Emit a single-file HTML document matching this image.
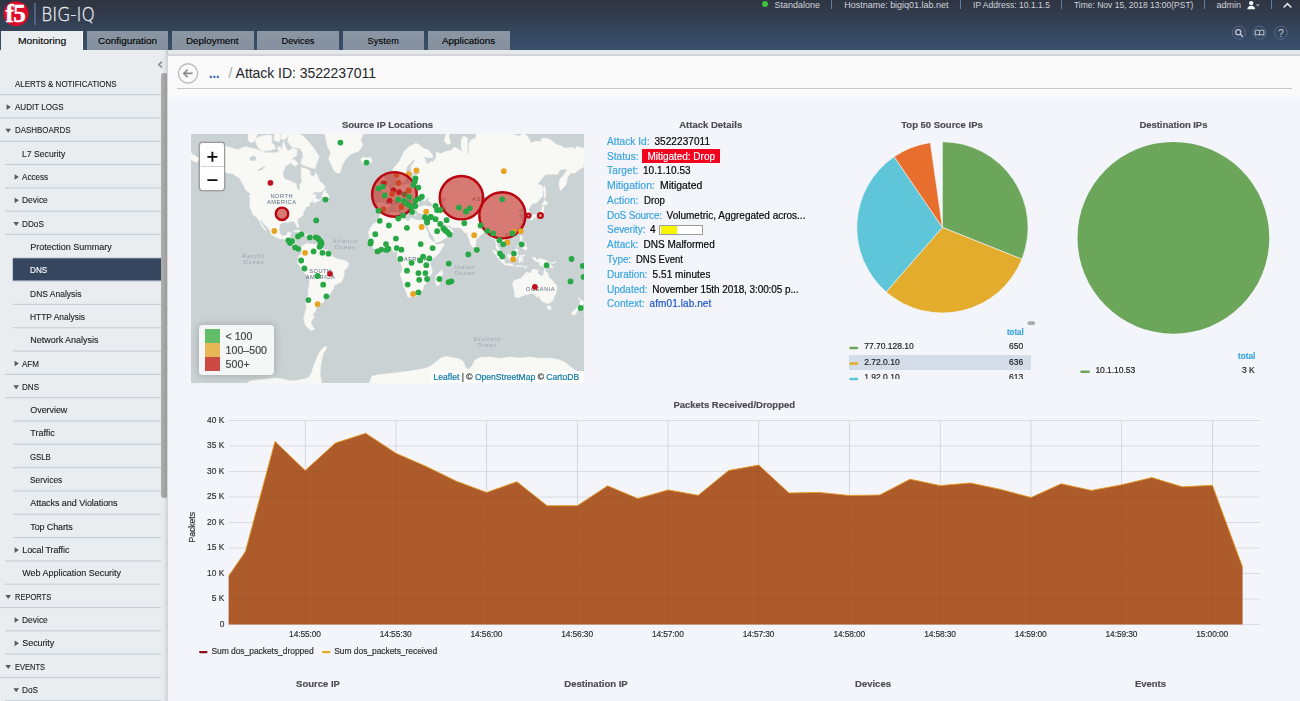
<!DOCTYPE html>
<html lang="en"><head><meta charset="utf-8"><title>BIG-IQ - Attack ID: 3522237011</title>
<style>
*{box-sizing:border-box}
html,body{margin:0;padding:0}
body{width:1300px;height:701px;position:relative;overflow:hidden;background:#f4f5fa;font-family:"Liberation Sans",Arial,sans-serif;}
.t{position:absolute;white-space:pre;line-height:1;}
.a{position:absolute;}
#hdr{position:absolute;left:0;top:0;width:1300px;height:50px;background:linear-gradient(#2f3441 0%,#323b4c 30%,#364962 75%,#38506b 100%);}
#band{position:absolute;left:0;top:50px;width:1300px;height:6px;background:linear-gradient(#e4e8eb 0,#e4e8eb 60%,#c9cccf 85%,#d6d8da 100%);}
.tab{position:absolute;top:31px;height:19px;background:linear-gradient(#8a96a4,#84909e);}
.tab.on{background:#e9edf0;border-right:1px solid #f6f8fa;}
#side{position:absolute;left:0;top:50px;width:161px;height:651px;background:#e9edf0;will-change:transform;}
#side .t{-webkit-text-stroke-width:0.12px}
.sl{position:absolute;height:1px;background:#c4ced9;right:0;}
#sbar{position:absolute;left:161px;top:50px;width:7px;height:651px;background:linear-gradient(90deg,#e9edf0 0%,#e3e6e9 55%,#c3c6c9 100%);}
#thumb{position:absolute;left:161px;top:73px;width:7.4px;height:425.4px;background:linear-gradient(90deg,#adadad,#a4a4a4 50%,#979797);border-radius:3px;}
#content{position:absolute;left:0;top:0;width:1300px;height:701px;will-change:transform;pointer-events:none}
#content .t{-webkit-text-stroke-width:0.18px}
#top{position:absolute;left:168px;top:56px;width:1132px;height:41px;background:#fafafa;}
#main{position:absolute;left:168px;top:97px;width:1132px;height:604px;background:#f4f5fa;}
svg{position:absolute;display:block}
#map{left:191px;top:134px;}
#pies{left:840px;top:130px;}
#chart{left:180px;top:410px;}
</style></head><body>
<div id="hdr">
<svg class="a" style="left:0;top:0" width="36" height="30" viewBox="0 0 36 30"><circle cx="16" cy="13.7" r="12.5" fill="#dd0b2b"/><text x="15.3" y="22" text-anchor="middle" font-family="Liberation Serif, serif" font-weight="700" font-size="25" fill="#fff" stroke="#fff" stroke-width="0.5" style="letter-spacing:-0.5px">f5</text></svg>
<div class="a" style="left:34.2px;top:3px;width:1.5px;height:22px;background:#4f617e"></div>
<svg class="a" style="left:38px;top:0" width="64" height="30" viewBox="38 0 64 30"><text x="41.2" y="20.8" font-family="DejaVu Sans, Liberation Sans, sans-serif" font-weight="200" font-size="19.6" fill="#e8eaee" stroke="#e8eaee" stroke-width="0.3" textLength="53.6" lengthAdjust="spacingAndGlyphs">BIG-IQ</text></svg>
<div class="tab on" style="left:1px;width:82px"></div>
<span class="t" style="left:17.90px;top:36.70px;font-size:9.2px;color:#000;transform:scaleX(1.1221);transform-origin:0 50%;-webkit-text-stroke:0.12px #000;">Monitoring</span>
<div class="tab" style="left:86.5px;width:81.5px"></div>
<span class="t" style="left:97.65px;top:36.70px;font-size:9.2px;color:#000;transform:scaleX(1.0818);transform-origin:0 50%;-webkit-text-stroke:0.12px #000;">Configuration</span>
<div class="tab" style="left:172px;width:81.5px"></div>
<span class="t" style="left:186.45px;top:36.70px;font-size:9.2px;color:#000;transform:scaleX(1.0715);transform-origin:0 50%;-webkit-text-stroke:0.12px #000;">Deployment</span>
<div class="tab" style="left:257px;width:82px"></div>
<span class="t" style="left:281.50px;top:36.70px;font-size:9.2px;color:#000;letter-spacing:0.040px;-webkit-text-stroke:0.12px #000;">Devices</span>
<div class="tab" style="left:342.5px;width:81.5px"></div>
<span class="t" style="left:367.55px;top:36.70px;font-size:9.2px;color:#000;letter-spacing:0.121px;-webkit-text-stroke:0.12px #000;">System</span>
<div class="tab" style="left:428px;width:81.5px"></div>
<span class="t" style="left:442.15px;top:36.70px;font-size:9.2px;color:#000;transform:scaleX(1.0724);transform-origin:0 50%;-webkit-text-stroke:0.12px #000;">Applications</span>
<div class="a" style="left:762.4px;top:1.2px;width:6px;height:6px;border-radius:3px;background:#3fc33c"></div>
<span class="t" style="left:774.60px;top:0.60px;font-size:9px;color:#cfd4dc;letter-spacing:-0.014px;">Standalone</span>
<span class="t" style="left:844.30px;top:0.60px;font-size:9px;color:#cfd4dc;letter-spacing:-0.019px;">Hostname: bigiq01.lab.net</span>
<span class="t" style="left:972.60px;top:0.60px;font-size:9px;color:#cfd4dc;transform:scaleX(0.9519);transform-origin:0 50%;">IP Address: 10.1.1.5</span>
<span class="t" style="left:1073.60px;top:0.60px;font-size:9px;color:#cfd4dc;transform:scaleX(0.9422);transform-origin:0 50%;">Time: Nov 15, 2018 13:00(PST)</span>
<span class="t" style="left:1216.40px;top:0.60px;font-size:9px;color:#cfd4dc;letter-spacing:0.017px;">admin</span>
<div class="a" style="left:831.0px;top:0;width:1px;height:9px;background:#5c7ea8"></div>
<div class="a" style="left:959.9px;top:0;width:1px;height:9px;background:#5c7ea8"></div>
<div class="a" style="left:1060.9px;top:0;width:1px;height:9px;background:#5c7ea8"></div>
<div class="a" style="left:1203.9px;top:0;width:1px;height:9px;background:#5c7ea8"></div>
<div class="a" style="left:1270.9px;top:0;width:1px;height:9px;background:#5c7ea8"></div>
<svg class="a" style="left:1245px;top:0" width="50" height="12" viewBox="1245 0 50 12"><circle cx="1251.2" cy="3.1" r="2.2" fill="#f1f2f4"/><path d="M1247.3 9.3 q0.2 -3.5 3.9 -3.5 q3.7 0 3.9 3.5z" fill="#f1f2f4"/><path d="M1255.9 4.4h3.8l-1.9 2.1z" fill="#b9bfc8"/><path d="M1283.6 7.5l3.9-3.8 3.9 3.8" fill="none" stroke="#e3e5e9" stroke-width="1.6"/></svg>
<svg class="a" style="left:1228px;top:22px" width="66" height="22" viewBox="1228 22 66 22" fill="none" stroke="#c3c9d2"><g stroke="#586c8c" stroke-width="0.9"><circle cx="1238.9" cy="32.7" r="6.5"/><circle cx="1259.7" cy="32.7" r="6.5"/><circle cx="1280.9" cy="32.7" r="6.5"/></g><circle cx="1238.3" cy="32.3" r="2.6" stroke-width="1.25"/><path d="M1240.3 34.3l2.5 2.4" stroke-width="1.5"/><path d="M1255.3 30.6q2.1 -1.2 4.3 0q2.2 -1.2 4.3 0v4.5q-2.1 -1 -4.3 0q-2.2 -1 -4.3 0zM1259.6 30.6v4.5" stroke-width="1"/></svg>
<span class="t" style="left:1277.98px;top:27.85px;font-size:10.5px;color:#c3c9d2;">?</span>
</div>
<div id="band"></div>
<div id="side">
<svg class="a" style="left:0;top:0" width="161" height="651" viewBox="0 0 161 651"><rect x="0" y="44.00" width="161" height="1.2" fill="#c6d0da"/><path transform="translate(8.5 57.11)" d="M-1.9 -2.8L2.3 0L-1.9 2.8z" fill="#55585e"/><rect x="0" y="67.31" width="161" height="1.2" fill="#c6d0da"/><path transform="translate(8.2 80.53)" d="M-2.8 -1.7L2.8 -1.7L0 2.2z" fill="#55585e"/><rect x="0" y="90.63" width="161" height="1.2" fill="#c6d0da"/><rect x="5" y="113.94" width="156" height="1.2" fill="#c6d0da"/><path transform="translate(16.5 127.06)" d="M-1.9 -2.8L2.3 0L-1.9 2.8z" fill="#55585e"/><rect x="5" y="137.26" width="156" height="1.2" fill="#c6d0da"/><path transform="translate(16.5 150.37)" d="M-1.9 -2.8L2.3 0L-1.9 2.8z" fill="#55585e"/><rect x="5" y="160.57" width="156" height="1.2" fill="#c6d0da"/><path transform="translate(16.2 173.78)" d="M-2.8 -1.7L2.8 -1.7L0 2.2z" fill="#55585e"/><rect x="5" y="183.88" width="156" height="1.2" fill="#c6d0da"/><rect x="12.8" y="207.20" width="148.2" height="1.2" fill="#c6d0da"/><rect x="12.8" y="208.31" width="148.2" height="22.6" fill="#36465f"/><rect x="12.8" y="230.51" width="148.2" height="1.2" fill="#c6d0da"/><rect x="12.8" y="253.83" width="148.2" height="1.2" fill="#c6d0da"/><rect x="12.8" y="277.14" width="148.2" height="1.2" fill="#c6d0da"/><rect x="12.8" y="300.45" width="148.2" height="1.2" fill="#c6d0da"/><path transform="translate(16.5 313.57)" d="M-1.9 -2.8L2.3 0L-1.9 2.8z" fill="#55585e"/><rect x="5" y="323.77" width="156" height="1.2" fill="#c6d0da"/><path transform="translate(16.2 336.98)" d="M-2.8 -1.7L2.8 -1.7L0 2.2z" fill="#55585e"/><rect x="5" y="347.08" width="156" height="1.2" fill="#c6d0da"/><rect x="12.8" y="370.40" width="148.2" height="1.2" fill="#c6d0da"/><rect x="12.8" y="393.71" width="148.2" height="1.2" fill="#c6d0da"/><rect x="12.8" y="417.02" width="148.2" height="1.2" fill="#c6d0da"/><rect x="12.8" y="440.34" width="148.2" height="1.2" fill="#c6d0da"/><rect x="12.8" y="463.65" width="148.2" height="1.2" fill="#c6d0da"/><rect x="12.8" y="486.97" width="148.2" height="1.2" fill="#c6d0da"/><path transform="translate(16.5 500.08)" d="M-1.9 -2.8L2.3 0L-1.9 2.8z" fill="#55585e"/><rect x="5" y="510.28" width="156" height="1.2" fill="#c6d0da"/><rect x="5" y="533.59" width="156" height="1.2" fill="#c6d0da"/><path transform="translate(8.2 546.81)" d="M-2.8 -1.7L2.8 -1.7L0 2.2z" fill="#55585e"/><rect x="0" y="556.91" width="161" height="1.2" fill="#c6d0da"/><path transform="translate(16.5 570.02)" d="M-1.9 -2.8L2.3 0L-1.9 2.8z" fill="#55585e"/><rect x="5" y="580.22" width="156" height="1.2" fill="#c6d0da"/><path transform="translate(16.5 593.34)" d="M-1.9 -2.8L2.3 0L-1.9 2.8z" fill="#55585e"/><rect x="5" y="603.54" width="156" height="1.2" fill="#c6d0da"/><path transform="translate(8.2 616.75)" d="M-2.8 -1.7L2.8 -1.7L0 2.2z" fill="#55585e"/><rect x="0" y="626.85" width="161" height="1.2" fill="#c6d0da"/><path transform="translate(16.2 640.06)" d="M-2.8 -1.7L2.8 -1.7L0 2.2z" fill="#55585e"/><rect x="5" y="650.16" width="156" height="1.2" fill="#c6d0da"/></svg>
<span class="t" style="left:14.50px;top:29.75px;font-size:9px;color:#1b1d22;transform:scaleX(0.8859);transform-origin:0 50%;">ALERTS &amp; NOTIFICATIONS</span>
<span class="t" style="left:14.50px;top:53.06px;font-size:9px;color:#1b1d22;transform:scaleX(0.8942);transform-origin:0 50%;">AUDIT LOGS</span>
<span class="t" style="left:14.50px;top:76.38px;font-size:9px;color:#1b1d22;transform:scaleX(0.8807);transform-origin:0 50%;">DASHBOARDS</span>
<span class="t" style="left:22.30px;top:99.69px;font-size:9px;color:#1b1d22;transform:scaleX(0.9595);transform-origin:0 50%;">L7 Security</span>
<span class="t" style="left:22.30px;top:123.01px;font-size:9px;color:#1b1d22;transform:scaleX(0.8963);transform-origin:0 50%;">Access</span>
<span class="t" style="left:22.30px;top:146.32px;font-size:9px;color:#1b1d22;transform:scaleX(0.9378);transform-origin:0 50%;">Device</span>
<span class="t" style="left:22.30px;top:169.63px;font-size:9px;color:#1b1d22;transform:scaleX(0.9122);transform-origin:0 50%;">DDoS</span>
<span class="t" style="left:30.30px;top:192.95px;font-size:9px;color:#1b1d22;letter-spacing:-0.007px;">Protection Summary</span>
<span class="t" style="left:30.30px;top:216.26px;font-size:9px;color:#fff;transform:scaleX(0.9051);transform-origin:0 50%;">DNS</span>
<span class="t" style="left:30.30px;top:239.58px;font-size:9px;color:#1b1d22;transform:scaleX(0.9428);transform-origin:0 50%;">DNS Analysis</span>
<span class="t" style="left:30.30px;top:262.89px;font-size:9px;color:#1b1d22;transform:scaleX(0.9345);transform-origin:0 50%;">HTTP Analysis</span>
<span class="t" style="left:30.30px;top:286.20px;font-size:9px;color:#1b1d22;letter-spacing:-0.027px;">Network Analysis</span>
<span class="t" style="left:22.30px;top:309.52px;font-size:9px;color:#1b1d22;transform:scaleX(0.8948);transform-origin:0 50%;">AFM</span>
<span class="t" style="left:22.30px;top:332.83px;font-size:9px;color:#1b1d22;transform:scaleX(0.8946);transform-origin:0 50%;">DNS</span>
<span class="t" style="left:30.30px;top:356.15px;font-size:9px;color:#1b1d22;letter-spacing:-0.064px;">Overview</span>
<span class="t" style="left:30.30px;top:379.46px;font-size:9px;color:#1b1d22;">Traffic</span>
<span class="t" style="left:30.30px;top:402.77px;font-size:9px;color:#1b1d22;transform:scaleX(0.8662);transform-origin:0 50%;">GSLB</span>
<span class="t" style="left:30.30px;top:426.09px;font-size:9px;color:#1b1d22;transform:scaleX(0.9359);transform-origin:0 50%;">Services</span>
<span class="t" style="left:30.30px;top:449.40px;font-size:9px;color:#1b1d22;letter-spacing:-0.054px;">Attacks and Violations</span>
<span class="t" style="left:30.30px;top:472.72px;font-size:9px;color:#1b1d22;letter-spacing:-0.122px;">Top Charts</span>
<span class="t" style="left:22.30px;top:496.03px;font-size:9px;color:#1b1d22;letter-spacing:-0.105px;">Local Traffic</span>
<span class="t" style="left:22.30px;top:519.34px;font-size:9px;color:#1b1d22;letter-spacing:-0.029px;">Web Application Security</span>
<span class="t" style="left:14.50px;top:542.66px;font-size:9px;color:#1b1d22;transform:scaleX(0.8352);transform-origin:0 50%;">REPORTS</span>
<span class="t" style="left:22.30px;top:565.97px;font-size:9px;color:#1b1d22;transform:scaleX(0.9378);transform-origin:0 50%;">Device</span>
<span class="t" style="left:22.30px;top:589.29px;font-size:9px;color:#1b1d22;letter-spacing:-0.089px;">Security</span>
<span class="t" style="left:14.50px;top:612.60px;font-size:9px;color:#1b1d22;transform:scaleX(0.8331);transform-origin:0 50%;">EVENTS</span>
<span class="t" style="left:22.30px;top:635.91px;font-size:9px;color:#1b1d22;transform:scaleX(0.9138);transform-origin:0 50%;">DoS</span>
</div>
<div id="sbar"></div><div id="thumb"></div>
<svg class="a" style="left:156px;top:60px" width="8" height="10" viewBox="0 0 8 10"><path d="M6 1.6L2.8 4.6L6 7.6" fill="none" stroke="#8b8d90" stroke-width="1.5"/></svg>
<div id="top"></div><div id="main"></div>
<div class="a" style="left:166.5px;top:55px;width:1.5px;height:646px;background:linear-gradient(90deg,#c9ccd0,#e2e4e7)"></div>
<div class="a" style="left:177px;top:88.2px;width:1115px;height:1.2px;background:#c6c6c6"></div>
<svg class="a" style="left:176px;top:61px" width="24" height="24" viewBox="176 61 24 24"><circle cx="188" cy="73.4" r="9.6" fill="#fbfbfb" stroke="#bcbcbc" stroke-width="1.4"/><path d="M192.6 73.4h-8.4M187.7 69.5l-3.9 3.9 3.9 3.9" fill="none" stroke="#8a8a8a" stroke-width="1.6"/></svg>
<span class="t" style="left:209.00px;top:65.60px;font-size:14px;color:#2358a6;font-weight:700;transform:scaleX(0.8999);transform-origin:0 50%;">...</span>
<span class="t" style="left:228.60px;top:66.20px;font-size:14px;color:#a6a6a6;">/</span>
<span class="t" style="left:235.60px;top:66.20px;font-size:14px;color:#26282c;letter-spacing:-0.047px;">Attack ID: 3522237011</span>
<div id="content">
<span class="t" style="left:342.00px;top:120.45px;font-size:9.5px;color:#4b4c55;font-weight:700;letter-spacing:-0.008px;">Source IP Locations</span>
<span class="t" style="left:679.20px;top:120.45px;font-size:9.5px;color:#4b4c55;font-weight:700;letter-spacing:0.012px;">Attack Details</span>
<span class="t" style="left:901.25px;top:120.45px;font-size:9.5px;color:#4b4c55;font-weight:700;letter-spacing:-0.009px;">Top 50 Source IPs</span>
<span class="t" style="left:1139.40px;top:120.45px;font-size:9.5px;color:#4b4c55;font-weight:700;letter-spacing:-0.042px;">Destination IPs</span>
<span class="t" style="left:673.40px;top:399.95px;font-size:9.5px;color:#4b4c55;font-weight:700;letter-spacing:-0.016px;">Packets Received/Dropped</span>
<span class="t" style="left:296.09px;top:679.15px;font-size:9.5px;color:#4b4c55;font-weight:700;">Source IP</span>
<span class="t" style="left:564.33px;top:679.15px;font-size:9.5px;color:#4b4c55;font-weight:700;">Destination IP</span>
<span class="t" style="left:855.04px;top:679.15px;font-size:9.5px;color:#4b4c55;font-weight:700;">Devices</span>
<span class="t" style="left:1134.92px;top:679.15px;font-size:9.5px;color:#4b4c55;font-weight:700;">Events</span>
<svg id="map" viewBox="191 134 393 249" width="393" height="249">
<rect x="191" y="134" width="393" height="249" fill="#cbd2d4"/>
<path d="M201.5 159.5L203.7 151.9L214.2 142.2L231.3 147.9L237.9 149.7L245.7 146.6L257.9 149.7L265.6 152.7L276.6 152.7L282.2 149.7L283.3 141.5L287.7 151.3L293.2 148.2L297.1 149.7L296.5 155.6L292.1 158.4L291.0 162.4L285.5 166.1L282.7 173.1L283.3 175.9L284.9 179.4L289.9 180.4L293.2 182.8L296.2 183.4L296.5 187.1L298.2 190.2L299.9 189.9L299.9 184.3L302.1 181.4L301.0 176.3L301.5 173.1L301.0 167.6L305.9 168.5L309.8 170.8L310.4 175.3L313.1 176.7L315.3 174.2L315.9 172.4L318.7 178.4L319.8 181.4L323.6 184.3L325.3 188.1L322.5 190.2L320.9 192.1L314.2 192.1L311.5 195.0L314.2 194.2L315.9 194.5L315.3 197.5L316.4 199.1L319.8 199.9L320.9 198.3L319.8 200.4L317.5 201.3L314.2 203.0L313.1 200.7L309.8 202.7L309.3 205.2L309.8 205.8L305.4 207.3L305.4 208.9L303.7 211.0L303.2 212.4L303.7 214.7L302.1 215.8L299.9 217.4L297.6 219.1L297.3 221.7L298.8 225.7L298.3 227.7L296.8 226.7L295.7 224.2L294.3 221.7L292.1 221.3L288.8 221.4L288.3 222.7L286.6 222.6L283.3 222.2L280.0 224.2L279.4 226.7L279.1 231.0L280.0 233.9L281.1 235.1L282.7 236.0L285.5 235.6L287.1 234.5L287.1 232.7L291.0 232.2L290.5 235.1L289.6 238.6L292.1 238.8L294.9 239.4L294.9 242.6L294.7 244.3L296.0 246.3L297.6 246.7L299.3 245.9L301.5 247.1L301.5 248.2L301.0 248.2L298.8 248.4L297.1 248.0L295.4 247.3L293.2 245.4L292.3 244.3L290.5 242.0L288.3 241.4L286.0 240.9L283.3 238.6L280.5 238.9L277.2 237.8L274.4 236.3L271.1 234.5L270.6 232.2L269.5 229.8L266.7 226.7L265.0 224.9L262.8 222.3L261.7 220.0L260.3 219.4L260.6 221.7L262.5 224.9L264.5 227.9L266.1 230.4L265.3 230.4L263.4 227.9L261.2 224.9L260.1 222.3L258.4 219.8L257.6 218.3L256.2 216.5L254.0 215.8L252.3 212.7L251.8 211.3L250.1 208.2L249.8 203.7L250.1 199.1L249.3 195.2L251.2 194.2L249.0 192.5L245.7 189.9L243.5 185.3L241.3 181.4L239.1 177.4L235.7 175.9L232.4 173.5L228.0 173.1L223.6 172.0L219.7 174.2L219.2 170.8L216.9 176.3L212.5 180.4L208.1 183.4L204.8 184.3L209.2 181.4L212.5 176.3L208.1 175.3L204.8 170.8L203.7 167.3L209.2 162.4L204.8 162.4ZM297.6 133.0L303.2 136.1L309.8 143.3L313.7 148.2L319.2 156.8L317.0 162.4L314.8 168.8L307.6 166.6L301.0 164.1L301.5 159.8L303.2 156.8L302.6 152.7L299.9 148.2L292.1 147.2L287.7 141.5L288.8 133.0ZM255.6 141.5L257.9 147.2L262.3 151.0L268.9 150.6L275.5 148.8L274.4 144.9L271.7 143.3L271.7 135.3L267.8 135.0L261.2 136.1L256.7 138.0ZM247.9 139.8L250.7 142.6L254.5 141.2L257.3 134.2L259.0 131.4L253.4 125.9L249.0 131.4ZM273.9 139.8L278.9 142.2L280.5 138.0L280.0 133.0L276.1 132.2L273.9 136.1ZM281.1 139.1L283.8 139.8L287.7 136.8L287.7 131.4L281.6 131.4ZM254.5 121.3L271.1 121.3L282.2 118.9L298.8 121.3L298.8 130.2L285.5 128.9L271.1 128.1L256.7 126.8ZM291.0 159.8L294.3 159.8L298.2 163.6L295.4 166.1L292.1 164.4ZM321.6 196.5L325.3 197.8L328.6 198.0L328.9 196.3L328.1 194.2L325.8 192.5L325.8 189.9L324.2 190.7L323.1 193.3L322.0 195.5ZM306.5 112.7L312.0 123.6L320.9 123.6L325.3 136.1L327.5 146.6L330.8 152.7L328.6 158.4L331.9 166.1L334.1 170.8L337.4 173.1L339.7 173.1L341.9 166.1L345.2 159.8L350.7 154.2L358.5 151.3L362.9 144.9L360.7 139.8L364.0 132.2L366.2 123.6L364.0 113.8L367.3 102.2L354.0 79.5L337.4 83.9L320.9 88.0L312.0 98.9ZM360.7 159.8L362.9 163.6L366.2 165.1L370.6 162.9L372.3 161.1L370.6 157.6L367.3 157.9L362.9 157.3ZM301.5 247.1L303.7 244.8L306.5 243.7L308.2 242.7L308.7 244.3L312.0 243.7L316.4 244.8L318.7 244.6L320.9 247.1L324.2 249.9L327.5 250.1L330.3 251.5L331.9 254.8L331.9 256.5L334.1 257.6L338.0 259.3L341.9 259.8L345.2 260.9L348.3 262.6L348.5 265.4L346.3 268.7L344.1 271.0L344.1 275.6L342.4 280.3L340.8 282.6L337.4 283.5L334.1 285.7L333.4 288.8L330.8 292.6L328.6 296.5L326.4 297.9L323.6 297.2L324.2 299.9L323.1 302.7L318.7 303.4L318.1 306.3L315.3 306.3L316.4 308.5L314.8 312.3L312.6 313.9L314.2 317.1L310.9 321.4L311.5 324.9L314.8 329.2L310.9 330.6L307.6 327.7L304.8 324.0L303.7 318.8L304.8 313.9L306.5 307.8L305.7 303.4L305.9 300.6L308.2 295.2L308.2 291.3L309.3 285.1L309.6 279.1L309.3 277.1L307.6 275.6L303.2 272.1L301.9 269.9L299.9 265.9L297.6 263.1L297.3 261.3L298.8 259.8L297.9 257.6L298.8 255.9L299.9 254.8L301.0 253.7L301.7 252.1L301.5 249.3L301.0 248.2ZM380.6 214.1L385.0 214.9L390.5 212.7L398.3 212.0L399.4 212.7L398.6 215.8L399.4 217.2L403.8 218.7L408.2 221.3L409.3 220.4L409.9 218.2L412.6 218.3L414.8 219.6L419.3 220.4L422.6 220.0L425.1 220.2L423.2 222.0L424.8 224.9L426.4 229.2L428.1 232.7L428.4 235.7L430.3 239.2L432.5 240.9L434.7 242.6L435.1 243.7L436.9 244.8L440.3 244.0L443.8 243.4L443.4 245.9L441.4 249.3L440.3 251.5L438.1 253.7L435.3 256.5L433.1 258.5L431.4 260.9L430.3 263.7L430.9 266.5L432.0 268.7L432.2 273.3L429.2 276.2L425.9 279.1L426.4 283.2L423.7 285.7L423.5 288.1L421.5 291.3L418.7 294.9L415.9 296.5L411.5 296.8L409.3 297.6L407.4 296.5L407.1 293.9L405.4 290.0L403.8 286.9L403.2 282.6L401.0 277.3L400.2 274.4L402.1 269.9L402.1 266.5L400.8 263.1L400.2 261.5L397.5 258.7L397.1 255.9L397.7 252.6L396.9 251.5L393.8 251.7L392.2 249.5L389.4 249.5L386.1 250.6L384.4 251.0L382.2 250.7L378.9 251.6L377.2 251.0L374.5 249.0L372.5 247.1L372.3 245.4L370.6 244.3L368.6 242.6L367.9 240.1L369.0 238.6L369.2 235.1L368.4 232.7L369.5 229.8L371.2 226.7L372.8 224.5L375.0 223.2L376.4 221.7L376.7 219.1L379.5 216.8ZM441.7 269.9L443.0 273.8L441.9 275.6L440.3 281.4L439.2 285.1L436.9 285.7L435.3 282.6L435.8 279.1L435.8 275.6L438.1 273.8L440.3 271.6ZM377.2 212.4L376.7 210.0L377.5 206.7L376.9 203.7L378.4 202.5L383.3 203.0L385.5 203.1L385.9 199.1L384.4 197.0L382.0 195.4L385.5 194.7L385.2 193.0L387.4 193.3L389.0 191.1L391.1 190.0L392.2 187.1L394.9 186.0L396.8 185.3L396.4 182.4L396.3 179.4L398.8 178.0L398.8 181.4L398.0 183.4L399.4 185.3L402.7 185.3L407.7 184.0L410.4 183.4L410.4 179.4L413.7 178.8L413.2 175.3L418.2 174.2L420.4 173.1L418.2 172.0L412.6 173.1L411.0 170.8L411.0 166.1L414.8 161.1L413.7 159.0L411.0 162.4L406.5 167.3L406.2 170.8L408.2 173.1L405.4 175.9L405.4 180.4L403.0 182.4L401.4 182.4L399.6 176.3L398.8 174.2L396.0 177.0L393.3 175.3L392.7 170.8L393.3 168.0L396.6 164.9L399.4 161.6L401.6 157.0L403.8 151.9L407.1 148.2L411.5 145.6L415.9 143.3L419.3 144.9L421.5 146.6L423.7 148.5L428.1 149.7L432.5 154.8L432.5 157.9L428.1 157.6L424.2 156.5L425.9 162.9L428.7 163.6L431.4 161.1L432.0 162.4L435.8 158.4L436.4 151.9L438.6 152.7L440.3 153.6L446.9 151.3L451.3 150.3L454.1 147.2L458.0 148.8L462.4 151.9L461.3 146.6L461.3 139.8L463.5 136.1L467.4 138.0L467.4 146.6L467.9 155.6L469.0 152.7L469.0 143.3L471.2 139.8L475.6 138.0L476.8 133.4L483.4 132.2L483.4 127.2L490.0 123.6L497.8 121.3L502.2 115.4L505.5 118.9L511.0 121.3L512.1 132.2L508.8 133.0L513.2 134.2L518.8 136.1L524.3 133.4L528.7 138.0L530.9 143.3L534.2 141.5L540.9 141.5L542.0 138.0L548.6 138.7L553.0 141.5L555.2 143.9L563.0 146.6L564.1 148.2L572.9 147.2L575.1 149.7L576.2 146.6L581.8 147.5L586.2 149.7L590.6 154.2L597.3 158.4L595.0 162.4L588.4 159.8L586.2 161.1L584.0 162.4L583.4 167.3L579.6 169.0L575.1 173.1L570.7 173.1L567.4 177.4L566.3 183.8L564.1 187.1L560.4 190.7L559.1 185.3L559.7 179.4L563.0 176.3L567.4 169.7L564.1 169.0L560.2 169.7L557.5 174.2L551.9 174.2L545.3 174.6L539.8 181.4L537.0 184.0L540.9 185.3L543.1 187.1L543.1 189.9L542.5 195.9L539.8 199.1L536.5 203.0L533.1 203.4L531.5 204.5L530.4 206.7L528.2 208.9L530.1 212.4L530.1 214.7L528.2 215.6L526.8 215.8L527.1 212.4L525.4 211.0L525.4 208.8L522.1 207.5L521.0 209.6L517.7 209.3L518.8 212.0L522.6 212.0L519.9 214.5L519.1 215.6L521.0 218.5L522.1 220.4L522.1 222.3L519.9 226.1L518.8 227.9L516.5 230.0L513.2 231.2L509.9 232.4L508.8 233.6L506.9 232.0L504.9 233.9L504.2 235.3L506.0 238.0L507.7 240.3L508.0 243.1L506.0 244.8L503.5 246.8L503.3 245.4L501.1 244.3L500.5 242.8L498.8 241.5L497.8 242.6L497.0 245.4L498.0 247.1L499.2 249.0L501.1 250.4L501.6 253.2L502.4 255.0L501.6 255.1L499.2 253.3L498.2 250.4L495.9 247.6L496.3 244.8L495.5 240.9L495.2 238.0L492.6 238.6L491.5 238.0L491.7 236.3L490.6 234.2L488.9 232.2L487.8 231.0L485.6 231.8L483.4 232.7L482.8 233.9L481.2 234.5L478.2 237.7L475.9 239.2L476.0 242.0L475.4 245.1L473.4 247.3L472.9 247.6L471.6 245.9L470.1 243.1L469.6 240.3L467.9 236.8L467.7 234.5L467.4 232.7L465.1 233.0L463.5 231.2L462.4 229.5L461.3 228.2L458.0 227.6L455.2 227.7L451.3 227.2L450.2 225.5L447.5 225.9L444.7 224.5L443.0 222.0L441.4 221.3L440.3 222.0L441.2 224.5L442.5 226.1L443.6 227.0L444.1 228.5L446.9 228.9L449.1 226.7L449.7 228.5L452.1 229.8L453.3 231.0L451.3 233.6L450.8 235.3L448.0 237.2L444.7 238.6L441.0 240.9L436.9 242.2L435.3 242.3L434.4 239.7L433.6 237.4L430.3 232.7L428.7 228.8L425.9 224.2L425.7 222.3L425.1 220.2L425.3 219.8L425.9 217.8L427.0 214.5L427.0 212.7L423.7 213.5L420.9 213.4L418.2 212.8L417.4 211.7L416.5 209.2L416.2 207.9L419.3 206.7L421.5 206.4L424.2 205.2L427.0 206.0L429.8 206.7L433.1 206.0L432.5 203.7L429.2 201.4L428.1 200.2L430.3 197.2L425.9 198.8L424.2 201.4L423.1 199.9L424.2 199.1L421.5 198.1L420.0 200.2L418.7 203.0L417.9 204.5L418.7 206.3L416.5 207.0L413.7 207.0L412.6 207.7L412.6 209.6L413.7 211.0L412.6 213.1L411.2 212.7L410.4 210.3L408.8 207.7L408.8 205.5L406.5 203.7L403.8 201.4L402.5 199.7L400.8 200.2L401.0 202.2L402.7 204.8L404.9 205.5L407.7 207.9L406.0 207.6L405.4 209.6L404.9 211.0L404.6 211.0L404.9 208.9L403.8 207.9L401.6 206.4L399.4 204.5L398.3 202.5L396.6 201.8L395.5 202.5L392.7 203.3L390.7 203.4L390.7 205.5L387.8 207.5L386.9 209.2L386.6 211.0L385.0 212.7L382.2 212.8L381.1 213.8L380.2 212.7L378.9 212.1ZM188.2 149.7L192.6 154.2L199.3 158.4L197.0 162.4L190.4 159.8L188.2 161.1ZM381.1 192.5L383.9 191.6L388.6 190.4L389.1 187.7L387.5 187.1L387.0 184.3L385.4 182.4L384.8 181.4L385.0 178.4L383.3 178.0L383.9 176.1L381.7 176.1L380.6 178.4L381.1 181.4L381.9 183.8L383.9 185.3L383.7 186.6L382.2 186.8L382.4 189.0L381.5 189.5L383.3 190.0L382.2 190.7ZM376.1 189.7L380.2 188.6L380.6 186.2L381.1 184.3L379.5 182.8L377.8 183.8L376.1 185.3L376.7 187.1L375.8 189.0ZM531.9 216.5L533.1 216.6L536.5 215.7L538.7 215.7L540.9 215.1L542.9 214.2L543.1 211.0L544.2 208.9L543.6 206.3L542.0 207.0L541.8 209.6L540.3 212.0L538.7 212.4L537.6 214.2L534.2 214.5L532.0 215.8ZM542.0 206.0L543.6 204.5L545.6 205.2L548.1 203.3L546.7 202.2L544.2 200.0L543.6 203.0L542.3 203.7ZM530.9 217.2L532.8 217.0L532.6 219.8L531.5 220.4L530.7 218.2ZM533.7 216.8L535.9 216.2L535.6 217.4L534.2 218.1ZM544.2 185.3L545.3 189.0L545.8 193.3L545.3 197.8L544.2 199.1L544.2 195.9L543.9 189.9ZM521.5 227.7L521.9 229.2L520.8 231.6L520.1 230.4L520.6 228.3ZM509.4 233.9L509.9 234.5L508.3 235.9L507.4 234.9ZM475.6 245.7L477.6 248.2L477.1 249.6L475.6 249.9L475.3 247.6ZM520.4 235.7L522.3 235.8L522.1 238.3L521.5 240.3L524.3 242.0L523.7 242.3L522.1 241.2L520.6 241.1L519.9 239.2L520.3 238.2ZM522.1 248.7L523.7 247.1L525.9 245.7L527.1 248.2L526.5 249.5L525.8 250.2L524.3 249.0L523.2 248.2ZM525.4 242.6L526.2 244.3L525.4 245.4L524.8 244.3ZM522.1 243.4L523.4 244.5L523.2 246.2L522.6 245.4L522.1 244.8ZM516.8 247.3L519.3 244.8L519.1 243.9L517.1 246.5ZM507.7 254.3L508.8 254.6L509.9 254.8L512.1 253.0L513.8 251.5L515.4 249.3L516.5 248.7L518.8 250.6L517.3 252.1L517.7 254.0L518.8 255.4L517.3 255.7L517.1 257.6L515.8 259.3L515.4 260.9L513.8 260.9L512.1 260.2L510.5 260.2L508.8 258.7L507.7 256.8ZM492.6 250.3L495.0 250.7L496.6 252.6L498.3 254.1L501.1 255.9L502.2 257.6L504.4 259.8L504.2 262.9L502.7 262.9L500.3 260.9L498.9 259.3L497.2 257.1L496.1 254.8L494.4 253.2L492.8 251.2ZM503.5 264.0L504.9 263.1L507.2 263.8L509.7 263.6L511.8 264.3L513.8 265.2L513.7 266.0L511.0 265.8L507.2 265.2L504.9 264.7ZM515.4 265.8L518.8 265.7L523.2 265.7L523.2 266.3L518.8 266.5L516.0 266.5ZM523.7 267.9L525.4 266.3L527.6 265.8L526.5 266.9L524.8 267.8ZM519.3 262.6L518.8 260.4L518.8 257.6L519.9 255.7L521.0 255.2L523.2 255.5L525.4 254.7L524.8 256.1L521.5 256.1L520.1 257.4L521.5 257.6L523.5 257.4L522.1 258.7L522.6 260.4L523.2 261.5L522.6 262.6L521.9 261.7L521.0 259.8L520.4 260.9L520.3 262.6ZM532.0 257.4L535.3 257.4L536.5 260.2L539.2 258.4L543.1 259.4L547.0 260.7L548.6 262.6L550.3 263.1L550.3 264.3L553.6 267.9L550.8 267.8L548.6 265.9L546.4 265.0L545.3 266.7L543.1 266.7L540.9 265.4L539.8 265.8L539.8 263.1L537.6 261.6L534.8 260.9L534.0 259.8L535.3 259.3L533.1 259.0L532.0 258.2ZM551.4 262.6L553.6 262.6L555.6 261.3L555.2 262.6L553.0 263.5ZM513.2 281.4L512.7 285.1L513.8 288.8L514.9 293.2L514.3 296.5L517.7 297.9L521.0 296.5L524.3 295.2L528.7 293.9L532.0 293.2L535.3 294.9L537.6 297.9L539.5 295.2L539.8 298.5L542.0 301.3L545.8 303.0L549.2 303.4L550.8 301.7L553.0 300.6L554.1 296.5L556.0 293.2L556.9 288.8L556.4 285.1L553.9 282.6L551.9 279.7L549.2 277.9L548.1 274.4L547.5 272.7L545.8 272.1L544.7 268.5L543.9 271.0L543.6 274.4L542.0 276.2L539.2 274.4L537.6 273.3L538.4 270.1L536.5 269.9L533.7 269.3L532.0 270.2L530.6 273.0L528.7 272.9L526.5 272.1L524.3 274.8L522.4 276.2L521.5 278.3L518.8 279.1L516.0 279.9ZM547.2 306.0L551.0 306.0L550.8 309.3L549.2 310.0L547.8 308.5ZM578.1 297.2L580.1 299.2L581.2 300.6L584.0 301.4L584.3 302.7L582.9 304.1L581.8 306.7L580.7 307.0L580.5 304.8L579.3 303.8L580.3 302.0L579.6 299.9ZM578.1 305.7L579.8 307.3L578.5 310.0L576.5 311.6L576.0 313.9L573.5 315.0L571.3 313.9L572.9 311.2L575.7 309.3L576.8 307.3ZM444.1 141.5L448.0 144.3L450.8 143.3L448.6 136.1L453.5 128.1L462.4 120.4L460.2 118.9L452.4 123.6L448.0 130.2L445.2 136.8ZM293.2 231.6L296.5 230.1L299.3 230.6L302.1 232.2L305.2 233.7L301.5 234.0L301.0 233.1L298.8 231.9L296.0 231.2L294.3 231.8ZM304.9 235.7L306.5 234.0L309.8 234.2L311.5 235.4L310.9 235.9L308.7 236.3L307.9 236.5L307.0 236.0ZM300.6 235.8L302.8 236.0L302.1 236.5ZM312.9 235.7L314.6 235.8L314.2 236.3L313.0 236.3ZM401.0 211.0L404.3 210.7L404.0 212.8L401.6 212.0ZM396.4 206.7L397.9 206.7L397.8 209.3L396.6 209.6ZM396.8 204.3L397.7 204.0L397.6 206.0L396.9 205.8ZM413.3 214.5L416.2 214.7L415.9 215.1L413.3 214.9ZM422.9 215.1L425.3 214.3L424.6 215.4L423.5 215.7ZM277.2 149.1L280.0 151.0L281.6 149.1L280.5 146.9L278.3 146.9ZM246 384L250 381L262 379.5L275 378L283 379L290 381L300 380L308 378L311 374L313 368L316 360L319 353L323 348L326 346L326.8 348L323.5 353L321.5 360L320.5 368L320 375L322 384L369 384L372 376L380 374.5L395 373L410 371L425 368.5L431 366L436 362L440 358.5L446 356.5L452 357.5L458 358.5L463 361L466 368L469 369.5L472 366L475 360L480 357.5L490 357L500 358.5L510 357L520 358L530 357L540 358.5L550 358L560 360L566 363L572 368L578 372L585 373L585 384Z" fill="#f8f8f5" stroke="#f8f8f5" stroke-width="0.5" stroke-linejoin="round"/>
<path d="M439.2 200.7L442.5 197.5L445.8 198.3L445.8 200.7L443.6 201.4L443.0 204.5L445.2 206.0L446.9 208.2L446.3 212.4L443.0 212.4L441.4 210.3L441.9 207.5L439.7 203.7ZM250.1 160.3L254.5 161.1L256.7 157.9L254.0 155.6L249.6 157.6ZM257.9 170.8L261.7 170.1L265.6 166.6L263.9 166.4L260.1 168.5L257.9 169.7Z" fill="#cbd2d4"/>
<g font-family="Liberation Sans, sans-serif">
<text x="281.8" y="197.70000000000002" text-anchor="middle" font-size="5.7" fill="#5b6a80" style="letter-spacing:0.5px">NORTH</text><text x="281.8" y="203.70000000000002" text-anchor="middle" font-size="5.7" fill="#5b6a80" style="letter-spacing:0.5px">AMERICA</text>
<text x="320.5" y="273.0" text-anchor="middle" font-size="5.7" fill="#5b6a80" style="letter-spacing:0.5px">SOUTH</text><text x="320.5" y="279.0" text-anchor="middle" font-size="5.7" fill="#5b6a80" style="letter-spacing:0.5px">AMERICA</text>
<text x="416" y="261.0" text-anchor="middle" font-size="5.7" fill="#5b6a80" style="letter-spacing:0.5px">AFRICA</text>
<text x="479.6" y="201.3" text-anchor="middle" font-size="5.7" fill="#5b6a80" style="letter-spacing:0.5px">ASIA</text>
<text x="399" y="204.4" text-anchor="middle" font-size="5.7" fill="#5b6a80" style="letter-spacing:0.5px">EUROPE</text>
<text x="540.6" y="291.0" text-anchor="middle" font-size="5.7" fill="#5b6a80" style="letter-spacing:0.5px">OCEANIA</text>
<text x="345.5" y="242.70000000000002" text-anchor="middle" font-size="5.7" fill="#9aa6b0" style="font-style:italic;letter-spacing:0.9px">Atlantic</text><text x="345.5" y="248.70000000000002" text-anchor="middle" font-size="5.7" fill="#9aa6b0" style="font-style:italic;letter-spacing:0.9px">Ocean</text>
<text x="254" y="258.4" text-anchor="middle" font-size="5.7" fill="#9aa6b0" style="font-style:italic;letter-spacing:0.9px">Pacific</text><text x="254" y="264.4" text-anchor="middle" font-size="5.7" fill="#9aa6b0" style="font-style:italic;letter-spacing:0.9px">Ocean</text>
<text x="464.8" y="269.4" text-anchor="middle" font-size="5.7" fill="#9aa6b0" style="font-style:italic;letter-spacing:0.9px">Indian</text><text x="464.8" y="275.4" text-anchor="middle" font-size="5.7" fill="#9aa6b0" style="font-style:italic;letter-spacing:0.9px">Ocean</text>
<text x="487" y="341.4" text-anchor="middle" font-size="5" fill="#9aa6b0" style="font-style:italic;letter-spacing:0.9px">Southern</text><text x="487" y="347.4" text-anchor="middle" font-size="5" fill="#9aa6b0" style="font-style:italic;letter-spacing:0.9px">Ocean</text>
</g>
<circle cx="396.4" cy="174.5" r="2.9" fill="#e07a2a"/>
<circle cx="398.4" cy="182.9" r="2.9" fill="#e07a2a"/>
<circle cx="383.8" cy="183.4" r="2.9" fill="#bd1220"/>
<circle cx="393.4" cy="190.1" r="2.9" fill="#bd1220"/>
<circle cx="399.1" cy="192.2" r="2.9" fill="#bd1220"/>
<circle cx="408.6" cy="190.4" r="2.9" fill="#e07a2a"/>
<circle cx="392.1" cy="193.9" r="2.9" fill="#e07a2a"/>
<circle cx="404.6" cy="194.4" r="2.9" fill="#27a844"/>
<circle cx="389.7" cy="200.6" r="2.9" fill="#bd1220"/>
<circle cx="401.4" cy="206.9" r="2.9" fill="#e07a2a"/>
<circle cx="383.5" cy="209.4" r="2.9" fill="#e07a2a"/>
<circle cx="408.6" cy="174.2" r="2.9" fill="#e8a321"/>
<circle cx="394.4" cy="194.4" r="22.3" fill="#c0261c" fill-opacity="0.6" stroke="#ba0410" stroke-width="2.4"/>
<circle cx="461.4" cy="197.7" r="21.7" fill="#c0261c" fill-opacity="0.6" stroke="#ba0410" stroke-width="2.4"/>
<circle cx="502.4" cy="215.3" r="23.1" fill="#c0261c" fill-opacity="0.6" stroke="#ba0410" stroke-width="2.4"/>
<circle cx="282" cy="213.8" r="6.2" fill="#c0261c" fill-opacity="0.6" stroke="#ba0410" stroke-width="2.4"/>
<circle cx="528.5" cy="215.4" r="2.0" fill="#dd8a86" stroke="#ba0410" stroke-width="2"/>
<circle cx="540.4" cy="215.4" r="2.5" fill="#dd8a86" stroke="#ba0410" stroke-width="2"/>
<circle cx="270.4" cy="182.8" r="2.9" fill="#bd1220"/>
<circle cx="325.5" cy="199.6" r="2.9" fill="#27a844"/>
<circle cx="316.2" cy="220.4" r="2.9" fill="#27a844"/>
<circle cx="274.3" cy="231.0" r="2.9" fill="#e8a321"/>
<circle cx="301.4" cy="234.3" r="2.9" fill="#27a844"/>
<circle cx="298.0" cy="236.4" r="2.9" fill="#27a844"/>
<circle cx="309.8" cy="237.4" r="2.9" fill="#27a844"/>
<circle cx="315.8" cy="237.3" r="2.9" fill="#27a844"/>
<circle cx="318.2" cy="238.5" r="2.9" fill="#27a844"/>
<circle cx="319.6" cy="240.3" r="2.9" fill="#27a844"/>
<circle cx="321.1" cy="242" r="2.9" fill="#27a844"/>
<circle cx="321.5" cy="243.8" r="2.9" fill="#27a844"/>
<circle cx="320.5" cy="245.6" r="2.9" fill="#27a844"/>
<circle cx="319.6" cy="246.8" r="2.9" fill="#27a844"/>
<circle cx="288.3" cy="240.3" r="2.9" fill="#27a844"/>
<circle cx="292.1" cy="241.2" r="2.9" fill="#27a844"/>
<circle cx="290" cy="242.9" r="2.9" fill="#27a844"/>
<circle cx="295.1" cy="247.4" r="2.9" fill="#27a844"/>
<circle cx="298.3" cy="248.8" r="2.9" fill="#27a844"/>
<circle cx="305.1" cy="252.8" r="2.9" fill="#e8a321"/>
<circle cx="313.6" cy="251.4" r="2.9" fill="#27a844"/>
<circle cx="322.4" cy="252.8" r="2.9" fill="#27a844"/>
<circle cx="328.5" cy="253.7" r="2.9" fill="#27a844"/>
<circle cx="301.2" cy="260.5" r="2.9" fill="#27a844"/>
<circle cx="304.4" cy="268.5" r="2.9" fill="#27a844"/>
<circle cx="330" cy="273.8" r="2.9" fill="#bd1220"/>
<circle cx="317.6" cy="276" r="2.9" fill="#27a844"/>
<circle cx="323.2" cy="284.7" r="2.9" fill="#27a844"/>
<circle cx="326.4" cy="296.3" r="2.9" fill="#27a844"/>
<circle cx="308.4" cy="300.1" r="2.9" fill="#27a844"/>
<circle cx="317.6" cy="304.1" r="2.9" fill="#e8a321"/>
<circle cx="366.5" cy="162.6" r="2.9" fill="#27a844"/>
<circle cx="416.4" cy="170.5" r="2.9" fill="#e8a321"/>
<circle cx="383" cy="186.7" r="2.9" fill="#27a844"/>
<circle cx="378.5" cy="188.4" r="2.9" fill="#27a844"/>
<circle cx="415.4" cy="178.4" r="2.9" fill="#27a844"/>
<circle cx="414.7" cy="181.7" r="2.9" fill="#27a844"/>
<circle cx="413.4" cy="185.1" r="2.9" fill="#27a844"/>
<circle cx="418.4" cy="187.6" r="2.9" fill="#27a844"/>
<circle cx="384.7" cy="195.4" r="2.9" fill="#27a844"/>
<circle cx="409.4" cy="196.9" r="2.9" fill="#27a844"/>
<circle cx="398.2" cy="199.4" r="2.9" fill="#27a844"/>
<circle cx="421.9" cy="196.7" r="2.9" fill="#27a844"/>
<circle cx="418.9" cy="198.6" r="2.9" fill="#27a844"/>
<circle cx="415.4" cy="200.9" r="2.9" fill="#27a844"/>
<circle cx="403.9" cy="200.9" r="2.9" fill="#27a844"/>
<circle cx="406.4" cy="203.4" r="2.9" fill="#27a844"/>
<circle cx="408.9" cy="204.9" r="2.9" fill="#27a844"/>
<circle cx="411.4" cy="206.9" r="2.9" fill="#27a844"/>
<circle cx="415.4" cy="206.1" r="2.9" fill="#27a844"/>
<circle cx="378.5" cy="210.7" r="2.9" fill="#27a844"/>
<circle cx="412.1" cy="211.9" r="2.9" fill="#27a844"/>
<circle cx="403.1" cy="215.4" r="2.9" fill="#27a844"/>
<circle cx="398.3" cy="218.5" r="2.9" fill="#27a844"/>
<circle cx="379.7" cy="220.8" r="2.9" fill="#27a844"/>
<circle cx="426.2" cy="211.6" r="2.9" fill="#e8a321"/>
<circle cx="435.6" cy="205.9" r="2.9" fill="#27a844"/>
<circle cx="437" cy="210" r="2.9" fill="#27a844"/>
<circle cx="440.4" cy="210" r="2.9" fill="#27a844"/>
<circle cx="424.9" cy="217.2" r="2.9" fill="#27a844"/>
<circle cx="430.4" cy="217" r="2.9" fill="#27a844"/>
<circle cx="427.1" cy="220" r="2.9" fill="#27a844"/>
<circle cx="427.1" cy="222.5" r="2.9" fill="#27a844"/>
<circle cx="435.6" cy="219.2" r="2.9" fill="#27a844"/>
<circle cx="446.6" cy="220.2" r="2.9" fill="#27a844"/>
<circle cx="458.9" cy="207.6" r="2.9" fill="#27a844"/>
<circle cx="469.8" cy="208.3" r="2.9" fill="#27a844"/>
<circle cx="465.9" cy="211.5" r="2.9" fill="#27a844"/>
<circle cx="503.8" cy="171.2" r="2.9" fill="#e8a321"/>
<circle cx="502.2" cy="199.3" r="2.9" fill="#27a844"/>
<circle cx="431.1" cy="217.1" r="2.9" fill="#27a844"/>
<circle cx="440.2" cy="224" r="2.9" fill="#27a844"/>
<circle cx="443.4" cy="228.4" r="2.9" fill="#27a844"/>
<circle cx="445.3" cy="230.5" r="2.9" fill="#27a844"/>
<circle cx="447.6" cy="232.2" r="2.9" fill="#27a844"/>
<circle cx="449.6" cy="234.4" r="2.9" fill="#27a844"/>
<circle cx="437.1" cy="231.2" r="2.9" fill="#27a844"/>
<circle cx="464.3" cy="223.2" r="2.9" fill="#27a844"/>
<circle cx="480.6" cy="225.5" r="2.9" fill="#27a844"/>
<circle cx="474.2" cy="235.2" r="2.9" fill="#e8a321"/>
<circle cx="487.3" cy="230.8" r="2.9" fill="#27a844"/>
<circle cx="493.2" cy="233.4" r="2.9" fill="#27a844"/>
<circle cx="513.6" cy="231.7" r="2.9" fill="#e8a321"/>
<circle cx="512.4" cy="233.4" r="2.9" fill="#27a844"/>
<circle cx="520.8" cy="231.1" r="2.9" fill="#e8a321"/>
<circle cx="507.2" cy="242.4" r="2.9" fill="#e8a321"/>
<circle cx="499.4" cy="240.2" r="2.9" fill="#27a844"/>
<circle cx="503.2" cy="244.3" r="2.9" fill="#27a844"/>
<circle cx="521.6" cy="244.3" r="2.9" fill="#27a844"/>
<circle cx="388.9" cy="225.5" r="2.9" fill="#27a844"/>
<circle cx="406.9" cy="227.8" r="2.9" fill="#27a844"/>
<circle cx="421.6" cy="227" r="2.9" fill="#e8a321"/>
<circle cx="375.3" cy="234.2" r="2.9" fill="#27a844"/>
<circle cx="370.8" cy="241.4" r="2.9" fill="#27a844"/>
<circle cx="370.5" cy="243.4" r="2.9" fill="#27a844"/>
<circle cx="395.9" cy="238.6" r="2.9" fill="#27a844"/>
<circle cx="386" cy="244.1" r="2.9" fill="#27a844"/>
<circle cx="377.5" cy="251.4" r="2.9" fill="#27a844"/>
<circle cx="381.3" cy="249.6" r="2.9" fill="#27a844"/>
<circle cx="386.5" cy="249.9" r="2.9" fill="#27a844"/>
<circle cx="388.4" cy="248.7" r="2.9" fill="#27a844"/>
<circle cx="396.7" cy="248.1" r="2.9" fill="#27a844"/>
<circle cx="401.4" cy="249.7" r="2.9" fill="#27a844"/>
<circle cx="420.7" cy="244.1" r="2.9" fill="#27a844"/>
<circle cx="432.6" cy="248.1" r="2.9" fill="#27a844"/>
<circle cx="400.4" cy="258.9" r="2.9" fill="#27a844"/>
<circle cx="411.6" cy="262.8" r="2.9" fill="#27a844"/>
<circle cx="423.1" cy="256.7" r="2.9" fill="#27a844"/>
<circle cx="420.2" cy="260.4" r="2.9" fill="#27a844"/>
<circle cx="429.4" cy="258.4" r="2.9" fill="#27a844"/>
<circle cx="426.3" cy="265.2" r="2.9" fill="#27a844"/>
<circle cx="407" cy="270.7" r="2.9" fill="#27a844"/>
<circle cx="418.4" cy="273.1" r="2.9" fill="#27a844"/>
<circle cx="425.4" cy="273.1" r="2.9" fill="#27a844"/>
<circle cx="448.8" cy="263.6" r="2.9" fill="#27a844"/>
<circle cx="468.3" cy="254.4" r="2.9" fill="#27a844"/>
<circle cx="419.2" cy="279.8" r="2.9" fill="#27a844"/>
<circle cx="427.1" cy="279" r="2.9" fill="#27a844"/>
<circle cx="439.4" cy="279" r="2.9" fill="#27a844"/>
<circle cx="448.7" cy="282.2" r="2.9" fill="#27a844"/>
<circle cx="451.4" cy="281.3" r="2.9" fill="#27a844"/>
<circle cx="407.7" cy="284.6" r="2.9" fill="#27a844"/>
<circle cx="413.1" cy="293.9" r="2.9" fill="#e8a321"/>
<circle cx="418.4" cy="292.4" r="2.9" fill="#27a844"/>
<circle cx="476.8" cy="249.8" r="2.9" fill="#27a844"/>
<circle cx="500" cy="253.5" r="2.9" fill="#27a844"/>
<circle cx="502.2" cy="256.5" r="2.9" fill="#27a844"/>
<circle cx="513.9" cy="253.6" r="2.9" fill="#27a844"/>
<circle cx="513.2" cy="259.2" r="2.9" fill="#e8a321"/>
<circle cx="546.6" cy="265.2" r="2.9" fill="#27a844"/>
<circle cx="571.5" cy="259" r="2.9" fill="#27a844"/>
<circle cx="582.8" cy="265.9" r="2.9" fill="#27a844"/>
<circle cx="570.5" cy="281.4" r="2.9" fill="#27a844"/>
<circle cx="583.6" cy="276.9" r="2.9" fill="#27a844"/>
<circle cx="534.9" cy="286.9" r="2.9" fill="#bd1220"/>
<circle cx="580.6" cy="308" r="2.9" fill="#27a844"/>
<circle cx="340.4" cy="142.6" r="2.9" fill="#27a844"/>
</svg>
<div class="a" style="left:199.3px;top:142.3px;width:25.8px;height:48.8px;background:#fff;border:1.6px solid #9a9c9f;border-radius:3.5px;box-shadow:0 0 1.5px rgba(0,0,0,0.45)"></div>
<div class="a" style="left:200.6px;top:166px;width:23.2px;height:1px;background:#d0d0d0"></div>
<svg class="a" style="left:200px;top:144px" width="24" height="46" viewBox="200 144 24 46"><path d="M207.4 156.8h10M212.4 151.8v10M207.4 180.1h10" stroke="#0a0a0a" stroke-width="1.8" fill="none"/></svg>
<div class="a" style="left:199px;top:324.5px;width:75.2px;height:50.7px;background:rgba(250,250,250,0.9);border-radius:4px;box-shadow:0 0 9px rgba(0,0,0,0.22)"></div>
<div class="a" style="left:205px;top:329px;width:14.5px;height:14px;background:#62bd69"></div>
<div class="a" style="left:205px;top:343px;width:14.5px;height:14px;background:#e6b754"></div>
<div class="a" style="left:205px;top:357px;width:14.5px;height:14px;background:#cb4b42"></div>
<span class="t" style="left:225.60px;top:330.80px;font-size:10.6px;color:#454545;">&lt; 100</span>
<span class="t" style="left:225.60px;top:344.90px;font-size:10.6px;color:#454545;letter-spacing:0.019px;">100–500</span>
<span class="t" style="left:225.60px;top:359.00px;font-size:10.6px;color:#454545;letter-spacing:0.081px;">500+</span>
<div class="a" style="left:430.5px;top:371.4px;width:153.5px;height:11.6px;background:rgba(255,255,255,0.72)"></div>
<span class="t" style="left:433.60px;top:373.03px;font-size:8.55px;color:#0b78a8;">Leaflet</span>
<span class="t" style="left:459.27px;top:373.03px;font-size:8.55px;color:#333;"> | © </span>
<span class="t" style="left:474.92px;top:373.03px;font-size:8.55px;color:#0b78a8;">OpenStreetMap</span>
<span class="t" style="left:535.28px;top:373.03px;font-size:8.55px;color:#333;"> © </span>
<span class="t" style="left:546.33px;top:373.03px;font-size:8.55px;color:#0b78a8;">CartoDB</span>
<span class="t" style="left:607.10px;top:136.75px;font-size:10px;color:#38a3e0;letter-spacing:0.082px;">Attack Id:</span>
<span class="t" style="left:654.40px;top:136.75px;font-size:10px;color:#050506;letter-spacing:0.092px;">3522237011</span>
<span class="t" style="left:607.10px;top:151.53px;font-size:10px;color:#38a3e0;letter-spacing:0.039px;">Status:</span>
<div class="a" style="left:642.4px;top:148.93px;width:77.6px;height:14.5px;background:#f3001f"></div>
<span class="t" style="left:647.40px;top:151.53px;font-size:10px;color:#fff;letter-spacing:-0.014px;">Mitigated: Drop</span>
<span class="t" style="left:607.10px;top:166.31px;font-size:10px;color:#38a3e0;letter-spacing:0.118px;">Target:</span>
<span class="t" style="left:643.00px;top:166.31px;font-size:10px;color:#050506;letter-spacing:0.043px;">10.1.10.53</span>
<span class="t" style="left:607.10px;top:181.09px;font-size:10px;color:#38a3e0;transform:scaleX(1.0510);transform-origin:0 50%;">Mitigation:</span>
<span class="t" style="left:659.80px;top:181.09px;font-size:10px;color:#050506;transform:scaleX(1.0425);transform-origin:0 50%;">Mitigated</span>
<span class="t" style="left:607.10px;top:195.87px;font-size:10px;color:#38a3e0;letter-spacing:0.118px;">Action:</span>
<span class="t" style="left:643.60px;top:195.87px;font-size:10px;color:#050506;transform:scaleX(0.9596);transform-origin:0 50%;">Drop</span>
<span class="t" style="left:607.10px;top:210.65px;font-size:10px;color:#38a3e0;letter-spacing:-0.172px;">DoS Source:</span>
<span class="t" style="left:666.60px;top:210.65px;font-size:10px;color:#050506;letter-spacing:-0.005px;">Volumetric, Aggregated acros...</span>
<span class="t" style="left:607.10px;top:225.43px;font-size:10px;color:#38a3e0;letter-spacing:-0.067px;">Severity:</span>
<span class="t" style="left:649.90px;top:225.43px;font-size:10px;color:#050506;">4</span>
<div class="a" style="left:659.4px;top:224.83px;width:43.4px;height:10.6px;background:#fff;border:1px solid #9b9b9b"><div style="position:absolute;left:0.6px;top:0.6px;width:15.8px;height:7.4px;background:#f8f400"></div></div>
<span class="t" style="left:607.10px;top:240.21px;font-size:10px;color:#38a3e0;letter-spacing:0.119px;">Attack:</span>
<span class="t" style="left:643.60px;top:240.21px;font-size:10px;color:#050506;">DNS Malformed</span>
<span class="t" style="left:607.10px;top:254.99px;font-size:10px;color:#38a3e0;letter-spacing:-0.112px;">Type:</span>
<span class="t" style="left:636.40px;top:254.99px;font-size:10px;color:#050506;transform:scaleX(0.9461);transform-origin:0 50%;">DNS Event</span>
<span class="t" style="left:607.10px;top:269.77px;font-size:10px;color:#38a3e0;letter-spacing:-0.020px;">Duration:</span>
<span class="t" style="left:652.60px;top:269.77px;font-size:10px;color:#050506;letter-spacing:0.054px;">5.51 minutes</span>
<span class="t" style="left:607.10px;top:284.55px;font-size:10px;color:#38a3e0;letter-spacing:-0.023px;">Updated:</span>
<span class="t" style="left:652.30px;top:284.55px;font-size:10px;color:#050506;letter-spacing:-0.087px;">November 15th 2018, 3:00:05 p...</span>
<span class="t" style="left:607.10px;top:299.33px;font-size:10px;color:#38a3e0;letter-spacing:0.057px;">Context:</span>
<span class="t" style="left:649.60px;top:299.33px;font-size:10px;color:#1c53c8;letter-spacing:0.093px;">afm01.lab.net</span>
<svg id="pies" viewBox="840 130 460 220" width="460" height="220">
<path d="M942.4 227.4L930.40 143.05A85.19999999999999 85.19999999999999 0 0 1 942.40 142.20Z" fill="#f6f7fb" stroke="#f7f7fa" stroke-width="0.6"/>
<path d="M942.4 227.4L942.40 141.80A85.6 85.6 0 0 1 1021.88 259.19Z" fill="#6ba65a" stroke="#f7f7fa" stroke-width="0.6"/>
<path d="M942.4 227.4L1021.88 259.19A85.6 85.6 0 0 1 886.13 291.91Z" fill="#e4ac2c" stroke="#f7f7fa" stroke-width="0.6"/>
<path d="M942.4 227.4L886.13 291.91A85.6 85.6 0 0 1 894.16 156.69Z" fill="#5fc6da" stroke="#f7f7fa" stroke-width="0.6"/>
<path d="M942.4 227.4L894.16 156.69A85.6 85.6 0 0 1 930.34 142.65Z" fill="#e86e2d" stroke="#f7f7fa" stroke-width="0.6"/>
<circle cx="1173.4" cy="237.8" r="95.9" fill="#6ba65a"/>
</svg>
<svg class="a" style="left:1026px;top:320px" width="11" height="7" viewBox="1026 320 11 7"><rect x="1027.4" y="321.2" width="7.8" height="3.8" rx="1.9" fill="#a9a9ab"/></svg>
<span class="t" style="left:1006.60px;top:327.95px;font-size:8.5px;color:#38a3e0;font-weight:700;transform:scaleX(0.9252);transform-origin:0 50%;">total</span>
<div class="a" style="left:849.3px;top:354.5px;width:182px;height:15.3px;background:#d4dde7"></div>
<span class="t" style="left:864.20px;top:342.25px;font-size:8.5px;color:#222327;">77.70.128.10</span>
<span class="t" style="left:1009.02px;top:342.25px;font-size:8.5px;color:#222327;">650</span>
<svg class="a" style="left:848px;top:345px" width="13" height="6" viewBox="848 345 13 6"><rect x="849.3" y="346.8" width="9" height="2.4" rx="1.2" fill="#6ba65a"/></svg>
<span class="t" style="left:864.20px;top:357.75px;font-size:8.5px;color:#222327;">2.72.0.10</span>
<span class="t" style="left:1009.02px;top:357.75px;font-size:8.5px;color:#222327;">636</span>
<svg class="a" style="left:848px;top:361px" width="13" height="6" viewBox="848 361 13 6"><rect x="849.3" y="362.3" width="9" height="2.4" rx="1.2" fill="#e4ac2c"/></svg>
<div class="a" style="left:849px;top:371.50px;width:182px;height:7.60px;overflow:hidden"><span class="t" style="left:15.20px;top:1.75px;font-size:8.5px;color:#222327;">1.92.0.10</span><span class="t" style="left:160.02px;top:1.75px;font-size:8.5px;color:#222327;">613</span></div>
<svg class="a" style="left:848px;top:376px" width="13" height="6" viewBox="848 376 13 6"><rect x="849.3" y="377.8" width="9" height="2.4" rx="1.2" fill="#5fc6da"/></svg>
<span class="t" style="left:1237.60px;top:351.75px;font-size:8.5px;color:#38a3e0;font-weight:700;transform:scaleX(0.9586);transform-origin:0 50%;">total</span>
<span class="t" style="left:1095.40px;top:366.15px;font-size:8.5px;color:#222327;letter-spacing:-0.048px;">10.1.10.53</span>
<span class="t" style="left:1242.04px;top:366.15px;font-size:8.5px;color:#222327;">3 K</span>
<svg class="a" style="left:1079px;top:369px" width="13" height="6" viewBox="1079 369 13 6"><rect x="1080.3" y="370.6" width="9.6" height="2.4" rx="1.2" fill="#6ba65a"/></svg>
<svg id="chart" viewBox="180 410 1100 225" width="1100" height="225">
<rect x="228.6" y="624.25" width="1031.4" height="0.7" fill="#cfd0d6"/>
<rect x="228.6" y="598.74" width="1031.4" height="0.7" fill="#cfd0d6"/>
<rect x="228.6" y="573.23" width="1031.4" height="0.7" fill="#cfd0d6"/>
<rect x="228.6" y="547.71" width="1031.4" height="0.7" fill="#cfd0d6"/>
<rect x="228.6" y="522.20" width="1031.4" height="0.7" fill="#cfd0d6"/>
<rect x="228.6" y="496.69" width="1031.4" height="0.7" fill="#cfd0d6"/>
<rect x="228.6" y="471.17" width="1031.4" height="0.7" fill="#cfd0d6"/>
<rect x="228.6" y="445.66" width="1031.4" height="0.7" fill="#cfd0d6"/>
<rect x="228.6" y="420.15" width="1031.4" height="0.7" fill="#cfd0d6"/>
<rect x="304.85" y="420.5" width="0.7" height="204.10000000000002" fill="#cbccd3"/>
<rect x="395.57" y="420.5" width="0.7" height="204.10000000000002" fill="#cbccd3"/>
<rect x="486.29" y="420.5" width="0.7" height="204.10000000000002" fill="#cbccd3"/>
<rect x="577.01" y="420.5" width="0.7" height="204.10000000000002" fill="#cbccd3"/>
<rect x="667.73" y="420.5" width="0.7" height="204.10000000000002" fill="#cbccd3"/>
<rect x="758.45" y="420.5" width="0.7" height="204.10000000000002" fill="#cbccd3"/>
<rect x="849.17" y="420.5" width="0.7" height="204.10000000000002" fill="#cbccd3"/>
<rect x="939.89" y="420.5" width="0.7" height="204.10000000000002" fill="#cbccd3"/>
<rect x="1030.61" y="420.5" width="0.7" height="204.10000000000002" fill="#cbccd3"/>
<rect x="1121.33" y="420.5" width="0.7" height="204.10000000000002" fill="#cbccd3"/>
<rect x="1212.05" y="420.5" width="0.7" height="204.10000000000002" fill="#cbccd3"/>
<polygon points="228.6,624.6 228.6,576.1 245.4,551.6 275.0,441.4 305.2,470.5 335.4,443.0 365.7,433.3 395.9,453.2 426.2,466.4 456.4,481.2 486.6,492.4 516.9,481.7 547.1,505.7 577.4,505.7 607.6,485.8 637.8,498.6 668.1,489.9 698.3,495.3 728.6,470.5 758.8,465.1 789.0,493.0 819.3,492.4 849.5,495.5 879.8,495.0 910.0,479.2 940.2,485.6 970.5,483.0 1000.7,489.4 1031.0,497.5 1061.2,483.8 1091.4,490.4 1121.7,484.8 1151.9,477.6 1182.2,486.8 1212.4,485.3 1242.6,567.2 1242.6,624.6" fill="#ad5b2b"/>
<clipPath id="cf"><polygon points="228.6,624.6 228.6,576.1 245.4,551.6 275.0,441.4 305.2,470.5 335.4,443.0 365.7,433.3 395.9,453.2 426.2,466.4 456.4,481.2 486.6,492.4 516.9,481.7 547.1,505.7 577.4,505.7 607.6,485.8 637.8,498.6 668.1,489.9 698.3,495.3 728.6,470.5 758.8,465.1 789.0,493.0 819.3,492.4 849.5,495.5 879.8,495.0 910.0,479.2 940.2,485.6 970.5,483.0 1000.7,489.4 1031.0,497.5 1061.2,483.8 1091.4,490.4 1121.7,484.8 1151.9,477.6 1182.2,486.8 1212.4,485.3 1242.6,567.2 1242.6,624.6"/></clipPath>
<g clip-path="url(#cf)" fill="#5a2408" fill-opacity="0.07"><rect x="228.6" y="598.69" width="1031.4" height="0.8"/><rect x="228.6" y="573.18" width="1031.4" height="0.8"/><rect x="228.6" y="547.66" width="1031.4" height="0.8"/><rect x="228.6" y="522.15" width="1031.4" height="0.8"/><rect x="228.6" y="496.64" width="1031.4" height="0.8"/><rect x="228.6" y="471.12" width="1031.4" height="0.8"/><rect x="228.6" y="445.61" width="1031.4" height="0.8"/><rect x="304.80" y="420.5" width="0.8" height="204.10000000000002"/><rect x="395.52" y="420.5" width="0.8" height="204.10000000000002"/><rect x="486.24" y="420.5" width="0.8" height="204.10000000000002"/><rect x="576.96" y="420.5" width="0.8" height="204.10000000000002"/><rect x="667.68" y="420.5" width="0.8" height="204.10000000000002"/><rect x="758.40" y="420.5" width="0.8" height="204.10000000000002"/><rect x="849.12" y="420.5" width="0.8" height="204.10000000000002"/><rect x="939.84" y="420.5" width="0.8" height="204.10000000000002"/><rect x="1030.56" y="420.5" width="0.8" height="204.10000000000002"/><rect x="1121.28" y="420.5" width="0.8" height="204.10000000000002"/><rect x="1212.00" y="420.5" width="0.8" height="204.10000000000002"/></g>
<polyline points="228.6,576.1 245.4,551.6 275.0,441.4 305.2,470.5 335.4,443.0 365.7,433.3 395.9,453.2 426.2,466.4 456.4,481.2 486.6,492.4 516.9,481.7 547.1,505.7 577.4,505.7 607.6,485.8 637.8,498.6 668.1,489.9 698.3,495.3 728.6,470.5 758.8,465.1 789.0,493.0 819.3,492.4 849.5,495.5 879.8,495.0 910.0,479.2 940.2,485.6 970.5,483.0 1000.7,489.4 1031.0,497.5 1061.2,483.8 1091.4,490.4 1121.7,484.8 1151.9,477.6 1182.2,486.8 1212.4,485.3 1242.6,567.2" fill="none" stroke="#e39a22" stroke-width="0.9" stroke-linejoin="round"/>
</svg>
<span class="t" style="left:219.73px;top:619.70px;font-size:8.4px;color:#303137;">0</span>
<span class="t" style="left:211.79px;top:594.19px;font-size:8.4px;color:#303137;">5 K</span>
<span class="t" style="left:207.12px;top:568.67px;font-size:8.4px;color:#303137;">10 K</span>
<span class="t" style="left:207.12px;top:543.16px;font-size:8.4px;color:#303137;">15 K</span>
<span class="t" style="left:207.12px;top:517.65px;font-size:8.4px;color:#303137;">20 K</span>
<span class="t" style="left:207.12px;top:492.14px;font-size:8.4px;color:#303137;">25 K</span>
<span class="t" style="left:207.12px;top:466.62px;font-size:8.4px;color:#303137;">30 K</span>
<span class="t" style="left:207.12px;top:441.11px;font-size:8.4px;color:#303137;">35 K</span>
<span class="t" style="left:207.12px;top:415.60px;font-size:8.4px;color:#303137;">40 K</span>
<span class="t" style="left:289.10px;top:630.40px;font-size:8.4px;color:#303137;letter-spacing:-0.112px;">14:55:00</span>
<span class="t" style="left:379.82px;top:630.40px;font-size:8.4px;color:#303137;letter-spacing:-0.112px;">14:55:30</span>
<span class="t" style="left:470.54px;top:630.40px;font-size:8.4px;color:#303137;letter-spacing:-0.112px;">14:56:00</span>
<span class="t" style="left:561.26px;top:630.40px;font-size:8.4px;color:#303137;letter-spacing:-0.112px;">14:56:30</span>
<span class="t" style="left:651.98px;top:630.40px;font-size:8.4px;color:#303137;letter-spacing:-0.112px;">14:57:00</span>
<span class="t" style="left:742.70px;top:630.40px;font-size:8.4px;color:#303137;letter-spacing:-0.112px;">14:57:30</span>
<span class="t" style="left:833.42px;top:630.40px;font-size:8.4px;color:#303137;letter-spacing:-0.112px;">14:58:00</span>
<span class="t" style="left:924.14px;top:630.40px;font-size:8.4px;color:#303137;letter-spacing:-0.112px;">14:58:30</span>
<span class="t" style="left:1014.86px;top:630.40px;font-size:8.4px;color:#303137;letter-spacing:-0.112px;">14:59:00</span>
<span class="t" style="left:1105.58px;top:630.40px;font-size:8.4px;color:#303137;letter-spacing:-0.112px;">14:59:30</span>
<span class="t" style="left:1196.30px;top:630.40px;font-size:8.4px;color:#303137;letter-spacing:-0.112px;">15:00:00</span>
<span class="t" style="left:177.00px;top:523.00px;font-size:8.6px;color:#303137;transform:rotate(-90deg);transform-origin:50% 50%;">Packets</span>
<svg class="a" style="left:198px;top:649px" width="12" height="6" viewBox="198 649 12 6"><rect x="199" y="650.9" width="8.6" height="2.3" rx="1.15" fill="#8f0f12"/></svg>
<span class="t" style="left:211.40px;top:647.25px;font-size:8.5px;color:#303137;letter-spacing:-0.056px;">Sum dos_packets_dropped</span>
<svg class="a" style="left:321px;top:649px" width="12" height="6" viewBox="321 649 12 6"><rect x="322" y="650.9" width="8.6" height="2.3" rx="1.15" fill="#e9a823"/></svg>
<span class="t" style="left:334.20px;top:647.25px;font-size:8.5px;color:#303137;letter-spacing:-0.059px;">Sum dos_packets_received</span>
</div>
</body></html>
